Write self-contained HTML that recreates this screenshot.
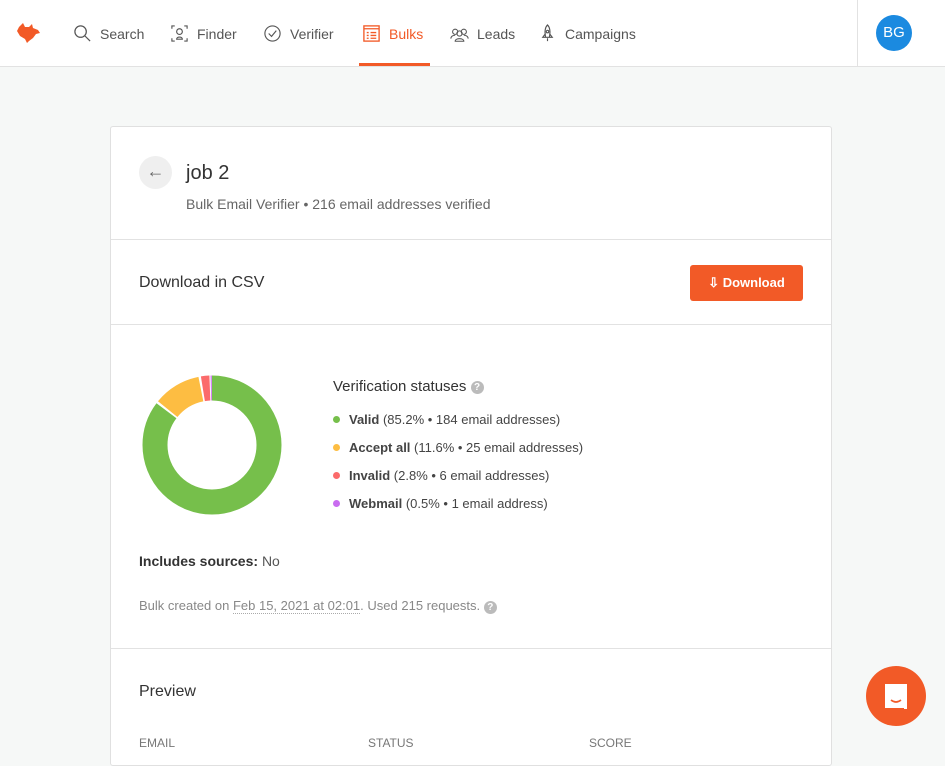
<!DOCTYPE html>
<html><head><style>
*{box-sizing:border-box;margin:0;padding:0}
body{width:945px;height:747px;overflow:hidden;background:#f6f8f7;font-family:"Liberation Sans",sans-serif;color:#333;position:relative}
.nav{position:absolute;left:0;top:0;width:945px;height:67px;background:#fff;border-bottom:1px solid #e2e2e2}
.nav .it{position:absolute;top:24px;font-size:14px;color:#555;display:flex;align-items:center;gap:8px}
.nav .it svg{width:19px;height:19px}
.act{color:#f25a27!important}
.ul{position:absolute;left:359px;top:63px;width:71px;height:3px;background:#f25a27}
.sep{position:absolute;left:857px;top:0;width:1px;height:66px;background:#e2e2e2}
.av{position:absolute;left:876px;top:15px;width:36px;height:36px;border-radius:50%;background:#1b8ae0;color:#fff;font-size:15px;text-align:center;line-height:36px}
.card{position:absolute;left:110px;top:126px;width:722px;height:640px;background:#fff;border:1px solid #e0e0e0;border-radius:3px}
.hr{position:absolute;left:0;width:720px;height:1px;background:#e2e2e2}
.t{position:absolute;white-space:nowrap}
.dot{display:inline-block;width:7px;height:7px;border-radius:50%;margin-right:9px;vertical-align:1px}
.lg{font-size:13px;color:#444}
.lg b{font-weight:bold;color:#444}
</style></head><body>
<div class="nav">
 <svg style="position:absolute;left:16px;top:21px" width="26" height="24" viewBox="0 0 26 24"><path d="M3 6 L7 2 L9 6 L13 6 L16 3 L17 7 L22 9 L24 12 L20 13 L17 17 L13 20 L11 22 L9 18 L4 15 L1 10 Z" fill="#f25a27"/></svg>
 <div class="it" style="left:73px"><svg viewBox="0 0 20 20"><circle cx="8" cy="8" r="6" fill="none" stroke="#555" stroke-width="1.3"/><path d="M12.5 12.5L18 18" stroke="#555" stroke-width="1.3"/></svg>Search</div>
 <div class="it" style="left:170px"><svg viewBox="0 0 20 20" fill="none" stroke="#555" stroke-width="1.2"><path d="M2 5V2h3M15 2h3v3M2 15v3h3M15 18h3v-3"/><circle cx="10" cy="8" r="3"/><path d="M7 16c0-3 6-3 6 0z"/></svg>Finder</div>
 <div class="it" style="left:263px"><svg viewBox="0 0 20 20" fill="none" stroke="#555" stroke-width="1.2"><circle cx="10" cy="10" r="8"/><path d="M6 10l3 3 5-6"/></svg>Verifier</div>
 <div class="it act" style="left:362px"><svg viewBox="0 0 20 20" fill="none" stroke="#f25a27" stroke-width="1.4"><rect x="2" y="2" width="16" height="16"/><path d="M2 5h16M5 9h2M9 9h6M5 12h2M9 12h6M5 15h2M9 15h6"/></svg>Bulks</div>
 <div class="it" style="left:450px"><svg viewBox="0 0 22 20" fill="none" stroke="#555" stroke-width="1.2"><circle cx="6" cy="8" r="3"/><circle cx="16" cy="8" r="3"/><circle cx="11" cy="10" r="3"/><path d="M1 16c0-3 3-4 5-4M21 16c0-3-3-4-5-4M6 19c0-4 10-4 10 0z"/></svg>Leads</div>
 <div class="it" style="left:538px"><svg viewBox="0 0 20 20" fill="none" stroke="#555" stroke-width="1.2"><path d="M10 1c3 3 3 8 2 13H8C7 9 7 4 10 1zM8 10l-3 4 3 0M12 10l3 4-3 0M10 15v3"/><circle cx="10" cy="8" r="1.3"/></svg>Campaigns</div>
 <div class="ul"></div><div class="sep"></div><div class="av">BG</div>
</div>
<div class="card">
 <div class="t" style="left:28px;top:29px;width:33px;height:33px;border-radius:50%;background:#efefef;text-align:center;line-height:31px;font-size:18px;color:#666">←</div>
 <div class="t" style="left:75px;top:35px;font-size:20px;color:#333">job 2</div>
 <div class="t" style="left:75px;top:69px;font-size:14px;color:#666">Bulk Email Verifier • 216 email addresses verified</div>
 <div class="hr" style="top:112px"></div>
 <div class="t" style="left:28px;top:147px;font-size:16px;color:#333">Download in CSV</div>
 <div class="t" style="left:579px;top:138px;width:113px;height:36px;background:#f25a27;border-radius:3px;color:#fff;font-size:13px;font-weight:bold;line-height:36px;text-align:center">⇩ Download</div>
 <div class="hr" style="top:197px"></div>
 <svg class="t" style="left:30px;top:247px" width="142" height="142" viewBox="0 0 142 142">
  <g transform="rotate(-90 71 71)" fill="none" stroke-width="25">
   <circle cx="71" cy="71" r="57" stroke="#76bf4b" stroke-dasharray="305.1 400" stroke-dashoffset="0"/>
   <circle cx="71" cy="71" r="57" stroke="#fdbd42" stroke-dasharray="39.5 400" stroke-dashoffset="-307.1"/>
   <circle cx="71" cy="71" r="57" stroke="#fb6b6b" stroke-dasharray="7 400" stroke-dashoffset="-348.6"/>
   <circle cx="71" cy="71" r="57" stroke="#c96cf0" stroke-dasharray="1 400" stroke-dashoffset="-356.6"/>
  </g>
 </svg>
 <div class="t" style="left:222px;top:251px;font-size:15px;color:#333">Verification statuses <span style="display:inline-block;width:13px;height:13px;border-radius:50%;background:#bbb;color:#fff;font-size:10px;text-align:center;line-height:13px;font-weight:bold;vertical-align:1px">?</span></div>
 <div class="t lg" style="left:222px;top:285px"><span class="dot" style="background:#76bf4b"></span><b>Valid</b> (85.2% • 184 email addresses)</div>
 <div class="t lg" style="left:222px;top:313px"><span class="dot" style="background:#fdbd42"></span><b>Accept all</b> (11.6% • 25 email addresses)</div>
 <div class="t lg" style="left:222px;top:341px"><span class="dot" style="background:#fb6b6b"></span><b>Invalid</b> (2.8% • 6 email addresses)</div>
 <div class="t lg" style="left:222px;top:369px"><span class="dot" style="background:#c96cf0"></span><b>Webmail</b> (0.5% • 1 email address)</div>
 <div class="t" style="left:28px;top:426px;font-size:14px;color:#333"><b>Includes sources:</b> <span style="color:#555">No</span></div>
 <div class="t" style="left:28px;top:471px;font-size:13px;color:#888">Bulk created on <span style="border-bottom:1px dotted #aaa">Feb 15, 2021 at 02:01</span>. Used 215 requests. <span style="display:inline-block;width:13px;height:13px;border-radius:50%;background:#bbb;color:#fff;font-size:10px;text-align:center;line-height:13px;font-weight:bold">?</span></div>
 <div class="hr" style="top:521px"></div>
 <div class="t" style="left:28px;top:556px;font-size:16px;color:#333">Preview</div>
 <div class="t" style="left:28px;top:609px;font-size:12px;color:#777">EMAIL</div>
 <div class="t" style="left:257px;top:609px;font-size:12px;color:#777">STATUS</div>
 <div class="t" style="left:478px;top:609px;font-size:12px;color:#777">SCORE</div>
</div>
<div class="t" style="left:866px;top:666px;width:60px;height:60px;border-radius:50%;background:#f25a27">
 <svg width="60" height="60" viewBox="0 0 60 60"><path d="M19 18h22v25h-3v-1H19z" fill="#fff"/><path d="M25 34q5 4 10 0" fill="none" stroke="#f25a27" stroke-width="1.6"/></svg>
</div>
</body></html>
